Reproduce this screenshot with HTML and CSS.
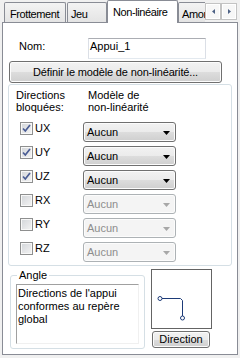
FILE: index.html
```html
<!DOCTYPE html>
<html lang="fr">
<head>
    <meta charset="UTF-8">
    <meta name="viewport" content="width=device-width, initial-scale=1.0">
    <title>Appui - Non-linéaire</title>
    <link rel="stylesheet" href="styles.css">
</head>
<body>

<!-- Tab strip -->
<div class="tabstrip">
    <div class="tabs">
        <div class="tab tab-frott">Frottement</div>
        <div class="tab tab-jeu">Jeu</div>
        <div class="tab tab-active">Non-linéaire</div>
        <div class="tab tab-amor">Amortissement</div>
    </div>
    <div class="tab-scroll">
        <span class="scroll-btn"><svg width="3" height="5" viewBox="0 0 3 5"><path d="M3 0 L0 2.5 L3 5 Z" fill="#4d6185"/></svg></span>
        <span class="scroll-btn"><svg width="3" height="5" viewBox="0 0 3 5"><path d="M0 0 L3 2.5 L0 5 Z" fill="#4d6185"/></svg></span>
    </div>
</div>

<!-- Tab page -->
<div class="page">
    <div class="name-row">
        <label>Nom:</label>
        <div class="textbox">Appui_1</div>
    </div>

    <button class="btn define-btn">Définir le modèle de non-linéarité...</button>

    <div class="group">
        <div class="group-head">
            <div class="col-dir">Directions<br>bloquées:</div>
            <div class="col-model">Modèle de<br>non-linéarité</div>
        </div>
        <div class="dir-rows">
            <div class="dir-row">
                <span class="check checked"><svg width="11" height="11" viewBox="0 0 11 11"><path d="M2 5.5 L4.3 8 L9 2" fill="none" stroke="#4a5d94" stroke-width="1.7"/></svg></span>
                <span class="dir-label">UX</span>
                <div class="combo"><span>Aucun</span><svg width="7" height="4" viewBox="0 0 7 4"><path d="M0 0 H7 L3.5 4 Z" fill="#000"/></svg></div>
            </div>
            <div class="dir-row">
                <span class="check checked"><svg width="11" height="11" viewBox="0 0 11 11"><path d="M2 5.5 L4.3 8 L9 2" fill="none" stroke="#4a5d94" stroke-width="1.7"/></svg></span>
                <span class="dir-label">UY</span>
                <div class="combo"><span>Aucun</span><svg width="7" height="4" viewBox="0 0 7 4"><path d="M0 0 H7 L3.5 4 Z" fill="#000"/></svg></div>
            </div>
            <div class="dir-row">
                <span class="check checked"><svg width="11" height="11" viewBox="0 0 11 11"><path d="M2 5.5 L4.3 8 L9 2" fill="none" stroke="#4a5d94" stroke-width="1.7"/></svg></span>
                <span class="dir-label">UZ</span>
                <div class="combo"><span>Aucun</span><svg width="7" height="4" viewBox="0 0 7 4"><path d="M0 0 H7 L3.5 4 Z" fill="#000"/></svg></div>
            </div>
            <div class="dir-row">
                <span class="check"></span>
                <span class="dir-label">RX</span>
                <div class="combo disabled"><span>Aucun</span><svg width="7" height="4" viewBox="0 0 7 4"><path d="M0 0 H7 L3.5 4 Z" fill="#a7a7a7"/></svg></div>
            </div>
            <div class="dir-row">
                <span class="check"></span>
                <span class="dir-label">RY</span>
                <div class="combo disabled"><span>Aucun</span><svg width="7" height="4" viewBox="0 0 7 4"><path d="M0 0 H7 L3.5 4 Z" fill="#a7a7a7"/></svg></div>
            </div>
            <div class="dir-row">
                <span class="check"></span>
                <span class="dir-label">RZ</span>
                <div class="combo disabled"><span>Aucun</span><svg width="7" height="4" viewBox="0 0 7 4"><path d="M0 0 H7 L3.5 4 Z" fill="#a7a7a7"/></svg></div>
            </div>
        </div>
    </div>

    <div class="bottom">
        <fieldset class="angle">
            <legend>Angle</legend>
            <div class="angle-text">Directions de l'appui conformes au repère global</div>
        </fieldset>
        <div class="direction-col">
            <div class="preview">
                <svg width="59" height="58" viewBox="0 0 59 58">
                    <path d="M10 28.5 H28.5 L30.5 30.5 V46" fill="none" stroke="#1d3b78" stroke-width="1"/>
                    <circle cx="8" cy="28.5" r="2" fill="#fff" stroke="#1d3b78" stroke-width="1"/>
                    <circle cx="30.5" cy="48" r="2" fill="#fff" stroke="#1d3b78" stroke-width="1"/>
                </svg>
            </div>
            <button class="btn direction-btn">Direction</button>
        </div>
    </div>
</div>

</body>
</html>
```

FILE: styles.css
```css
* {
    box-sizing: border-box;
}

html, body {
    margin: 0;
}

body {
    width: 240px;
    height: 358px;
    overflow: hidden;
    background-color: #f0f0f0;
    font-family: "Liberation Sans", Arial, sans-serif;
    font-size: 11px;
    line-height: 13px;
    color: #000;
}

/* Tabs */
.tabstrip {
    display: flex;
    height: 23px;
    position: relative;
    z-index: 1;
}

.tabs {
    display: flex;
    align-items: flex-start;
    width: 205px;
    height: 23px;
    overflow: hidden;
    padding-left: 4px;
}

.tab {
    flex: none;
    height: 20px;
    margin-top: 2px;
    padding: 5px 0 0 3px;
    border: 1px solid #898c95;
    border-bottom: none;
    border-radius: 2px 2px 0 0;
    background: linear-gradient(#f3f3f3, #e4e4e4);
    white-space: nowrap;
    letter-spacing: -0.4px;
}

.tab-frott {
    width: 62px;
    padding-left: 5px;
    margin-right: 1px;
}

.tab-jeu {
    width: 40px;
}

.tab-active {
    width: 71px;
    height: 23px;
    margin-top: 0;
    padding-left: 5px;
    background: #fff;
}

.tab-amor {
    width: 80px;
}

.tab-scroll {
    display: flex;
    padding-top: 3px;
}

.scroll-btn {
    display: flex;
    align-items: center;
    justify-content: center;
    width: 16px;
    height: 17px;
    border: 1px solid #c3c3c3;
    background: #f7f7f7;
    box-shadow: inset 0 0 0 1px #fff;
}

/* Page */
.page {
    margin: -1px 2px 0 2px;
    height: 333px;
    border: 1px solid #898c95;
    background-color: #fff;
}

.name-row {
    display: flex;
    align-items: flex-start;
    height: 21px;
    margin: 15px 0 0 16px;
}

.name-row label {
    width: 69px;
    margin-top: 2px;
}

.textbox {
    width: 118px;
    height: 21px;
    padding: 1px 0 0 1px;
    border: 1px solid #dbdfe6;
    border-top-color: #abadb3;
    border-bottom-color: #e3e9ef;
}

.btn {
    display: block;
    padding: 0;
    font: inherit;
    line-height: 13px;
    color: #000;
    text-align: center;
    border: 1px solid #707070;
    border-radius: 3px;
    background: linear-gradient(#f2f2f2 0%, #ebebeb 50%, #dddddd 50%, #cfcfcf 100%);
    box-shadow: inset 0 0 0 1px #fcfcfc;
}

.define-btn {
    width: 213px;
    height: 22px;
    margin: 2px 0 0 6px;
    letter-spacing: -0.15px;
}

.group {
    width: 224px;
    height: 182px;
    margin: 1px 0 0 5px;
    padding: 4px 0 0 7px;
    border: 1px solid #d5dfe5;
    border-radius: 3px;
}

.group-head {
    display: flex;
    line-height: 12px;
}

.col-dir {
    width: 72px;
}

.dir-rows {
    margin-top: 7px;
}

.dir-row {
    display: flex;
    align-items: flex-start;
    height: 24px;
    padding-left: 4px;
}

.check {
    display: flex;
    align-items: center;
    justify-content: center;
    width: 13px;
    height: 13px;
    margin-top: 2px;
    border: 1px solid #8e8f8f;
    background: linear-gradient(135deg, #d2d5d9, #f4f4f4);
    box-shadow: inset 0 0 0 1px #f8f8f8;
}

.dir-label {
    width: 48px;
    margin: 2px 0 0 2px;
}

.combo {
    display: flex;
    align-items: center;
    justify-content: space-between;
    width: 93px;
    height: 20px;
    margin-top: 2px;
    padding: 1px 5px 0 3px;
    border: 1px solid #707070;
    border-radius: 3px;
    background: linear-gradient(#f2f2f2 0%, #ebebeb 50%, #dddddd 50%, #cfcfcf 100%);
    box-shadow: inset 0 0 0 1px #fcfcfc;
}

.combo.disabled {
    color: #8d8d8d;
    border-color: #adb2b5;
    background: #f4f4f4;
}

/* Bottom part */
.bottom {
    display: flex;
    margin-top: 3px;
}

.angle {
    width: 135px;
    height: 80px;
    margin: 0 0 0 7px;
    padding: 0 0 0 5px;
    border: 1px solid #d5dfe5;
    border-radius: 3px;
}

.angle legend {
    margin-left: 1px;
    padding: 0 2px;
    line-height: 13px;
}

.angle-text {
    width: 123px;
    height: 60px;
    margin-top: 2px;
    padding: 2px 0 0 1px;
    border: 1px solid #f0f0f0;
    border-top-color: #a0a0a0;
    border-left-color: #a0a0a0;
}

.direction-col {
    margin-left: 6px;
}

.preview {
    width: 61px;
    height: 60px;
    border: 1px solid #646464;
    background-color: #fff;
}

.preview svg {
    display: block;
}

.direction-btn {
    width: 58px;
    height: 17px;
    margin: 2px 0 0 1px;
}
```
